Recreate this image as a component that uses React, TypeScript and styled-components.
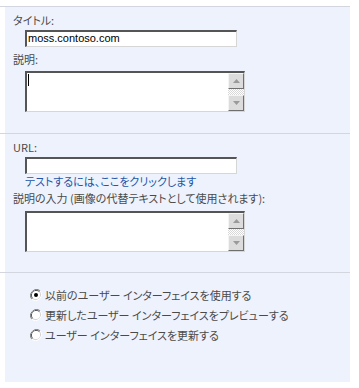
import React from "react";
import styled, { createGlobalStyle } from "styled-components";

const Global = createGlobalStyle`
  html, body { margin: 0; padding: 0; background: #ffffff; }
  body {
    font-family: "Noto Sans CJK JP", "Liberation Sans", sans-serif;
    font-size: 11px;
    font-feature-settings: "palt";
    color: #4a4a4a;
  }
`;

const Page = styled.div`
  width: 350px;
  padding-top: 6px;
  height: 382px;
  box-sizing: border-box;
  display: flex;
  flex-direction: column;
`;

const Section = styled.section<{ $grow?: boolean }>`
  display: flex;
  border-top: 1px solid #d3d6de;
  flex: ${(p) => (p.$grow ? "1" : "none")};
`;

const Gutter = styled.div`
  width: 5px;
  background: #ffffff;
  flex: none;
`;

const Body = styled.div<{ $h?: number; $pt: number; $pl: number }>`
  flex: 1;
  background: #eef2fc;
  padding: ${(p) => p.$pt}px 0 0 ${(p) => p.$pl}px;
  height: ${(p) => (p.$h ? `${p.$h}px` : "auto")};
  box-sizing: border-box;
  display: flex;
  flex-direction: column;
  align-items: flex-start;
`;

const Label = styled.div<{ $mt?: number }>`
  line-height: 14px;
  height: 14px;
  margin-top: ${(p) => p.$mt ?? 0}px;
  white-space: nowrap;
`;

const Indent = styled.div<{ $mt?: number }>`
  margin-left: 12px;
  margin-top: ${(p) => p.$mt ?? 0}px;
`;

const TextInput = styled.div`
  width: 212px;
  height: 17px;
  box-sizing: border-box;
  background: #ffffff;
  border-style: solid;
  border-width: 2px 1px 1px 2px;
  border-color: #555555 #d6d6d6 #d6d6d6 #555555;
  font-family: "Liberation Sans", Arial, sans-serif;
  font-size: 11px;
  line-height: 13px;
  color: #000000;
  padding-left: 1px;
  white-space: nowrap;
`;

const Link = styled.a`
  display: block;
  color: #2356a8;
  text-decoration: none;
  line-height: 14px;
  white-space: nowrap;
`;

const Area = styled.div`
  width: 220px;
  height: 41px;
  box-sizing: border-box;
  background: #ffffff;
  border-style: solid;
  border-width: 2px 1px 1px 2px;
  border-color: #555555 #d6d6d6 #d6d6d6 #555555;
  display: flex;
`;

const AreaText = styled.div`
  flex: 1;
  padding: 1px 0 0 1px;
`;

const Caret = styled.div`
  width: 1px;
  height: 12px;
  background: #000000;
`;

const Scrollbar = styled.div`
  width: 16px;
  display: flex;
  flex-direction: column;
`;

const ScrollButton = styled.div`
  height: 16px;
  box-sizing: border-box;
  background: #dcdcdc;
  border-style: solid;
  border-width: 1px;
  border-color: #f4f4f4 #6f6f6f #6f6f6f #f4f4f4;
  display: flex;
  align-items: center;
  justify-content: center;
`;

const Track = styled.div`
  flex: 1;
  background-color: #ffffff;
  background-image: repeating-conic-gradient(#d8d8d8 0 25%, #ffffff 0 50%);
  background-size: 2px 2px;
`;

const RadioList = styled.div`
  display: flex;
  flex-direction: column;
`;

const RadioRow = styled.label`
  display: flex;
  align-items: center;
  height: 20px;
  gap: 3px;
  white-space: nowrap;
`;

const Arrow = ({ up }: { up?: boolean }) => (
  <svg width="7" height="4" viewBox="0 0 7 4">
    <path d={up ? "M0 4 L3.5 0 L7 4 Z" : "M0 0 L3.5 4 L7 0 Z"} fill="#9a9a9a" />
  </svg>
);

const Radio = ({ checked }: { checked?: boolean }) => (
  <svg width="12" height="12" viewBox="0 0 12 12">
    <path d="M10.2 1.8 A6 6 0 0 0 1.8 10.2" stroke="#808080" strokeWidth="1" fill="none" />
    <path d="M9.5 2.5 A5 5 0 0 0 2.5 9.5" stroke="#404040" strokeWidth="1" fill="none" />
    <path d="M1.8 10.2 A6 6 0 0 0 10.2 1.8" stroke="#ffffff" strokeWidth="1" fill="none" />
    <path d="M2.5 9.5 A5 5 0 0 0 9.5 2.5" stroke="#d4d0c8" strokeWidth="1" fill="none" />
    <circle cx="6" cy="6" r="4" fill="#ffffff" />
    {checked && <circle cx="6" cy="6" r="2" fill="#000000" />}
  </svg>
);

const TextArea = ({ caret }: { caret?: boolean }) => (
  <Area>
    <AreaText>{caret && <Caret />}</AreaText>
    <Scrollbar>
      <ScrollButton>
        <Arrow up />
      </ScrollButton>
      <Track />
      <ScrollButton>
        <Arrow />
      </ScrollButton>
    </Scrollbar>
  </Area>
);

export default function App() {
  return (
    <>
      <Global />
      <Page>
        <Section>
          <Gutter />
          <Body $h={126} $pt={6} $pl={8}>
            <Label>タイトル:</Label>
            <Indent $mt={3}>
              <TextInput>moss.contoso.com</TextInput>
            </Indent>
            <Label $mt={5}>説明:</Label>
            <Indent $mt={5}>
              <TextArea caret />
            </Indent>
          </Body>
        </Section>
        <Section>
          <Gutter />
          <Body $h={138} $pt={6} $pl={8}>
            <Label>URL:</Label>
            <Indent $mt={3}>
              <TextInput />
              <Link href="#">テストするには、ここをクリックします</Link>
            </Indent>
            <Label $mt={3}>説明の入力 (画像の代替テキストとして使用されます):</Label>
            <Indent $mt={6}>
              <TextArea />
            </Indent>
          </Body>
        </Section>
        <Section $grow>
          <Gutter />
          <Body $pt={12} $pl={25}>
            <RadioList>
              <RadioRow>
                <Radio checked />
                以前のユーザー インターフェイスを使用する
              </RadioRow>
              <RadioRow>
                <Radio />
                更新したユーザー インターフェイスをプレビューする
              </RadioRow>
              <RadioRow>
                <Radio />
                ユーザー インターフェイスを更新する
              </RadioRow>
            </RadioList>
          </Body>
        </Section>
      </Page>
    </>
  );
}
